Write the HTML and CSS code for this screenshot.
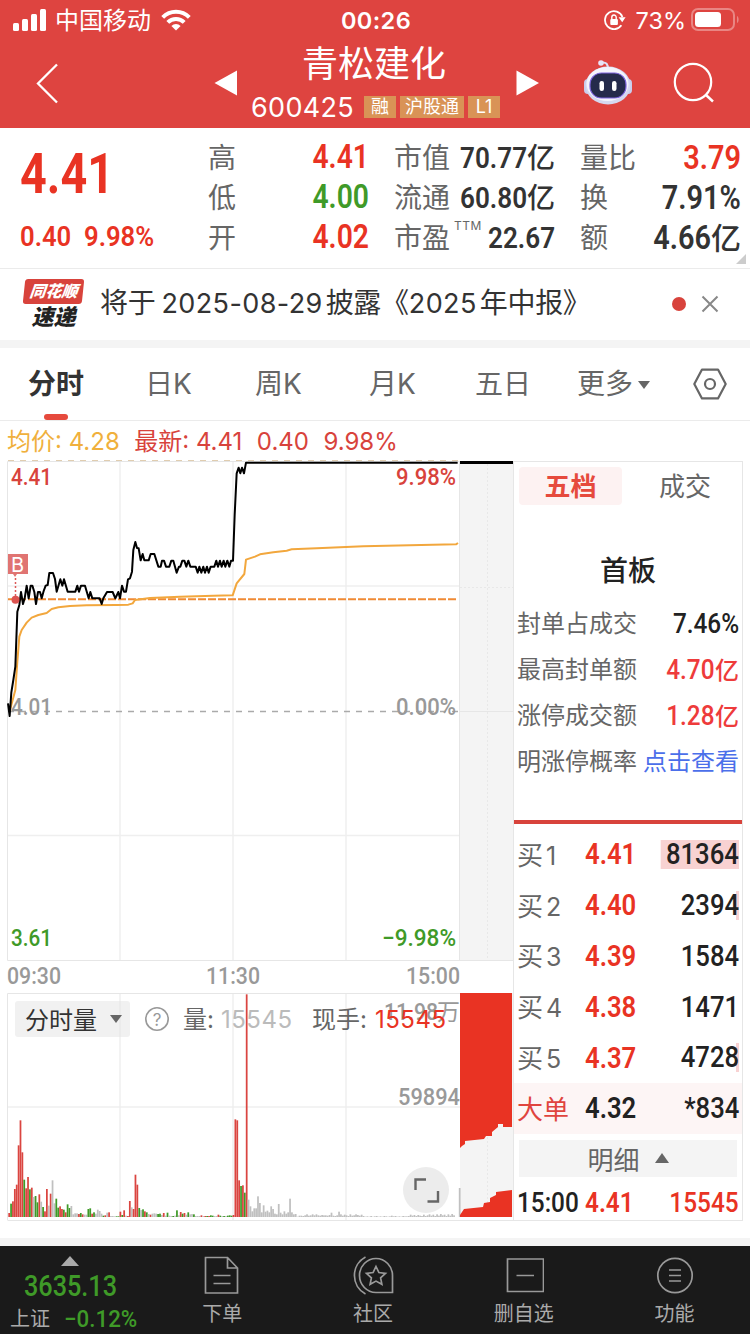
FILE: index.html
```html
<!DOCTYPE html>
<html lang="zh-CN">
<head>
    <meta charset="UTF-8">
    <meta name="viewport" content="width=device-width, initial-scale=1.0">
    <title>青松建化 600425</title>
    <link rel="stylesheet" href="styles.css">
</head>
<body>
    <header class="header">
        <div class="status-bar">
            <div class="status-left">
                <svg width="34" height="22" viewBox="0 0 34 22" fill="#fff">
                    <rect x="0" y="14" width="6" height="8" rx="1.5"/>
                    <rect x="9" y="10" width="6" height="12" rx="1.5"/>
                    <rect x="18" y="5" width="6" height="17" rx="1.5"/>
                    <rect x="27" y="0" width="6" height="22" rx="1.5"/>
                </svg>
                <span class="carrier">中国移动</span>
                <svg width="30" height="22" viewBox="0 0 30 22" fill="none" stroke="#fff" stroke-width="4">
                    <path d="M1.7 8.3a18.8 18.8 0 0 1 26.6 0"/>
                    <path d="M6.8 13.4a11.6 11.6 0 0 1 16.4 0"/>
                    <path d="M15 21.5l-4.6-4.6a6.5 6.5 0 0 1 9.2 0z" fill="#fff" stroke="none"/>
                </svg>
            </div>
            <div class="clock">00:26</div>
            <div class="status-right">
                <svg width="22" height="20" viewBox="0 0 22 20">
                    <path d="M18.4 7a9 9 0 1 0-1 8.3" fill="none" stroke="#fff" stroke-width="1.8"/>
                    <path d="M14.6 7.2h7l-3.4 5z" fill="#fff"/>
                    <rect x="6.3" y="9" width="7.6" height="6" rx="1" fill="#fff"/>
                    <path d="M7.8 9V7.2a2.2 2.2 0 0 1 4.4 0V9" fill="none" stroke="#fff" stroke-width="1.4"/>
                </svg>
                <span class="battery-text">73%</span>
                <svg width="49" height="24" viewBox="0 0 49 24">
                    <rect x="1" y="1" width="42" height="21" rx="6" fill="none" stroke="#e98683" stroke-width="2"/>
                    <rect x="4" y="4" width="26" height="15" rx="3.5" fill="#fff"/>
                    <path d="M46 8c2.200 1 2.200 6 0 7z" fill="#e98683"/>
                </svg>
            </div>
        </div>
        <div class="title-bar">
            <svg class="back" width="26" height="42" viewBox="0 0 26 42"><path d="M22 2.500L3 21.500l19 19" fill="none" stroke="#fff" stroke-width="2.300"/></svg>
            <svg class="prev" width="24" height="26" viewBox="0 0 24 26"><path d="M0.500 13L23 0.500v25z" fill="#fff"/></svg>
            <div class="stock">
                <div class="stock-name">青松建化</div>
                <div class="stock-code">600425 <span class="tag">融</span><span class="tag tag-wide">沪股通</span><span class="tag">L1</span></div>
            </div>
            <svg class="next" width="24" height="26" viewBox="0 0 24 26"><path d="M23 13L0.500 0.500v25z" fill="#fff"/></svg>
            <svg class="robot" width="50" height="46" viewBox="0 0 50 46">
                <path d="M18.500 2.500c5-.5 6.500 1.500 6.500 7" fill="none" stroke="#dfe0f4" stroke-width="2"/>
                <circle cx="18" cy="3" r="2.800" fill="#e8e3f6"/>
                <rect x="1" y="19" width="8" height="15" rx="4" fill="#c9cdec"/>
                <rect x="41" y="19" width="8" height="15" rx="4" fill="#c9cdec"/>
                <ellipse cx="25" cy="25.500" rx="22.500" ry="19" fill="#d5d8f0"/>
                <ellipse cx="24.500" cy="24" rx="21" ry="17" fill="#f4f4fc"/>
                <rect x="7" y="13" width="36" height="25" rx="11.500" fill="#252b4b" stroke="#7c63dc" stroke-width="1.200"/>
                <rect x="16.500" y="21" width="4.500" height="10" rx="2.200" fill="#fff"/>
                <rect x="29" y="21" width="4.500" height="10" rx="2.200" fill="#fff"/>
            </svg>
            <svg class="search" width="42" height="42" viewBox="0 0 42 42"><circle cx="20" cy="20" r="18.200" fill="none" stroke="#fff" stroke-width="2.200"/><path d="M33 33l7 6.500" stroke="#fff" stroke-width="2.400"/></svg>
        </div>
    </header>

    <section class="quote">
        <div class="quote-price">
            <div class="price num">4.41</div>
            <div class="change"><span class="num">0.40</span><span class="num">9.98%</span></div>
        </div>
        <dl class="stats">
            <div><dt>高</dt><dd class="red"><span class="num">4.41</span></dd></div>
            <div><dt>低</dt><dd class="green"><span class="num">4.00</span></dd></div>
            <div><dt>开</dt><dd class="red"><span class="num">4.02</span></dd></div>
        </dl>
        <dl class="stats stats-mid">
            <div><dt>市值</dt><dd><span class="num">70.77</span>亿</dd></div>
            <div><dt>流通</dt><dd><span class="num">60.80</span>亿</dd></div>
            <div><dt>市盈<sup>TTM</sup></dt><dd><span class="num">22.67</span></dd></div>
        </dl>
        <dl class="stats stats-right">
            <div><dt>量比</dt><dd class="red"><span class="num">3.79</span></dd></div>
            <div><dt>换</dt><dd><span class="num">7.91%</span></dd></div>
            <div><dt>额</dt><dd><span class="num">4.66</span>亿</dd></div>
        </dl>
        <span class="corner"></span>
    </section>

    <section class="notice">
        <div class="notice-logo">
            <div class="logo-top">同花顺</div>
            <div class="logo-bottom">速递</div>
        </div>
        <div class="notice-text">将于<span>2025-08-29</span>披露《<span>2025</span>年中报》</div>
        <span class="dot"></span>
        <svg width="18" height="18" viewBox="0 0 18 18"><path d="M1.500 1.500l15 15M16.500 1.500l-15 15" stroke="#888" stroke-width="2"/></svg>
    </section>

    <nav class="tabs">
        <a class="active">分时</a>
        <a>日K</a>
        <a>周K</a>
        <a>月K</a>
        <a>五日</a>
        <a class="more">更多<i class="caret"></i></a>
        <svg width="34" height="32" viewBox="0 0 34 32" fill="none" stroke="#666" stroke-width="2.200"><path d="M9 1.600h16L32.700 16 25 30.400H9L1.300 16z" stroke-linejoin="round"/><circle cx="17" cy="16" r="5"/></svg>
    </nav>

    <div class="legend">
        <span class="avg">均价: 4.28</span>
        <span>最新: 4.41</span>
        <span>0.40</span>
        <span>9.98%</span>
    </div>

    <main class="main">
        <svg class="chart" width="513" height="760" viewBox="0 0 513 760">
            <!-- after-hours strip -->
            <rect x="460" y="1" width="53" height="498" fill="#f4f4f4"/>
            <rect x="460" y="532" width="53" height="224" fill="#f4f4f4"/>
            <path d="M487.500 3v496M487.500 660v96M460 126.500h53" stroke="#e8e8e8" stroke-dasharray="2 2"/>
            <!-- grid -->
            <g fill="none" stroke="#e6e6e6">
                <path d="M7.500 499.500V.5H513M7.500 499.500H513M459.500 0v499M460 250.500h53"/>
                <path d="M7.500 759V532.500H460M7.500 759.500H513"/>
                <path d="M120 1v498M233 1v498M346 1v498M8 125h451M8 374.500h451M120 533v226M233 533v226M346 533v226M8 646h452" stroke="#efefef" stroke-width="1.500"/>
            </g>
            <path d="M8 -.5h452" stroke="#e0cdb0" stroke-dasharray="6 6"/>
            <path d="M8 250.500h451" stroke="#aaa" stroke-width="1.600" stroke-dasharray="6 6"/>
            <path d="M8 138.300h448" stroke="#f08a35" stroke-width="2" stroke-dasharray="8 2"/>
            <!-- line points are stored at 3x -->
            <g transform="translate(0 -6) scale(.33333)" fill="none" stroke-linejoin="round">
                <polyline stroke="#f2a73d" stroke-width="6" points="30,765 46,705 52,620 58,545 65,525 80,503 95,488 115,480 140,474 155,462 175,457 210,453 260,451 350,450 385,449 398,445 405,435 450,429 540,425 640,422 698,421 710,385 733,357 738,314 765,305 780,298 820,292 860,287 875,283 950,280 1090,274 1368,268 1374,264"/>
                <polyline stroke="#000" stroke-width="6" points="24,745 29,783 34,712 40,675 46,635 52,470 58,450 63,411 69,447 74,430 80,392 86,430 92,392 97,392 103,411 108,447 114,411 120,411 125,430 131,408 137,392 143,390 148,354 159,354 165,372 170,410 181,373 187,392 192,373 203,410 226,410 232,392 237,410 243,392 255,392 266,430 271,411 277,430 299,430 305,447 310,430 321,411 338,411 346,430 355,411 360,430 366,392 372,410 378,410 384,373 390,370 396,350 400,285 406,261 411,279 416,280 422,316 428,297 433,316 446,316 452,297 463,297 475,335 482,335 486,317 492,317 498,335 508,335 514,317 520,317 530,353 537,335 541,335 547,317 553,317 559,335 565,317 571,335 587,335 593,353 598,335 604,353 610,335 615,353 621,335 626,353 632,335 643,335 649,317 654,335 660,317 665,335 671,317 676,335 682,317 688,335 693,317 699,317 704,180 710,55 716,38 721,55 726,38 732,55 738,23 1373,23"/>
            </g>
            <path d="M460 1.500h53" stroke="#000" stroke-width="3"/>
            <!-- buy marker -->
            <path d="M8 93h20v20H17l-2 3-2-3H8z" fill="#e07472"/>
            <text x="17.500" y="110.500" class="marker" text-anchor="middle">B</text>
            <path d="M15.500 117v18" stroke="#dc5a58" stroke-width="1.500" stroke-dasharray="2 2"/>
            <circle cx="15.500" cy="138.700" r="4" fill="#dc5350"/>

            <text x="11" y="23.500" class="axis red" textLength="41" lengthAdjust="spacingAndGlyphs">4.41</text>
            <text x="396" y="23.500" class="axis red" textLength="60" lengthAdjust="spacingAndGlyphs">9.98%</text>
            <text x="11" y="254" class="axis" textLength="41" lengthAdjust="spacingAndGlyphs">4.01</text>
            <text x="396" y="254" class="axis" textLength="60" lengthAdjust="spacingAndGlyphs">0.00%</text>
            <text x="11" y="485" class="axis green" textLength="41" lengthAdjust="spacingAndGlyphs">3.61</text>
            <text x="382" y="485" class="axis green" textLength="74" lengthAdjust="spacingAndGlyphs">−9.98%</text>
            <text x="7" y="523" class="axis" textLength="54" lengthAdjust="spacingAndGlyphs">09:30</text>
            <text x="206" y="523" class="axis" textLength="54" lengthAdjust="spacingAndGlyphs">11:30</text>
            <text x="406" y="523" class="axis" textLength="54" lengthAdjust="spacingAndGlyphs">15:00</text>

            <!-- volume -->
            <rect x="15" y="540" width="115" height="36" rx="3" fill="#f1f1f1"/>
            <path d="M120 540v36" stroke="#e9e9e9" stroke-width="1.500"/>
            <text x="25" y="567.500" class="label dark">分时量</text>
            <path d="M110 554h12l-6 8z" fill="#666"/>
            <circle cx="157" cy="558" r="11.200" fill="none" stroke="#999" stroke-width="1.600"/>
            <text x="157" y="564.500" class="help" text-anchor="middle">?</text>
            <text x="183" y="567" class="label">量:</text>
            <text x="221" y="566.500" class="label light" textLength="71">15545</text>
            <text x="312" y="567" class="label dim">现手:</text>
            <text x="384" y="559" class="axis" textLength="54" lengthAdjust="spacingAndGlyphs">11.98</text>
            <text x="437" y="559" class="axis unit">万</text>
            <text x="375" y="566.500" class="label bright" textLength="71">15545</text>
            <text x="398" y="644" class="axis" textLength="62" lengthAdjust="spacingAndGlyphs">59894</text>
            <g id="bars"></g>
            <path d="M460 532h52v134h-9v-3h-5v3l-6 5v4h-6l-2 3-19 2v3l-3 2-2 2z" fill="#e93323"/>
            <path d="M460 756v-2l4-6 19-2 1-4 6-1v-4l6-3v-3l16-2v27z" fill="#e93323"/>
            <circle cx="426" cy="729" r="23" fill="#ececec"/>
            <path d="M415.500 729v-10.500h10.500M427.500 740.500h10.500V730" fill="none" stroke="#666" stroke-width="2.400"/>
        </svg>

        <aside class="panel">
            <div class="panel-tabs"><span class="active">五档</span><span>成交</span></div>
            <h2>首板</h2>
            <ul class="limits">
                <li>封单占成交<b><span class="num">7.46%</span></b></li>
                <li>最高封单额<b class="red"><span class="num">4.70</span>亿</b></li>
                <li>涨停成交额<b class="red"><span class="num">1.28</span>亿</b></li>
                <li>明涨停概率<a>点击查看</a></li>
            </ul>
            <ul class="orders">
                <li><span>买<em>1</em></span><span class="num red">4.41</span><span class="num vol hot">81364</span></li>
                <li><span>买<em>2</em></span><span class="num red">4.40</span><span class="num vol edge">2394</span></li>
                <li><span>买<em>3</em></span><span class="num red">4.39</span><span class="num vol">1584</span></li>
                <li><span>买<em>4</em></span><span class="num red">4.38</span><span class="num vol">1471</span></li>
                <li><span>买<em>5</em></span><span class="num red">4.37</span><span class="num vol edge">4728</span></li>
                <li class="big"><span class="red">大单</span><span class="num">4.32</span><span class="num vol">*834</span></li>
            </ul>
            <div class="detail">明细 <i></i></div>
            <div class="trade"><span class="num">15:00</span><span class="num red">4.41</span><span class="num vol red">15545</span></div>
        </aside>
    </main>

    <footer class="footer">
        <div class="index">
            <i></i>
            <div class="index-value"><span class="num">3635.13</span></div>
            <div class="index-change">上证<span class="num">−0.12%</span></div>
        </div>
        <div class="nav-item">
            <svg width="40" height="40" viewBox="0 0 40 40"><path d="M3.500 2.500h22l10 10.500v25h-32zM25.500 2.500V13h10M11.500 20.500h17M11.500 28.500h17"/></svg>
            <span>下单</span>
        </div>
        <div class="nav-item">
            <svg width="42" height="40" viewBox="0 0 42 40"><path d="M24 37.500h16.500V20.500A16.500 17 0 1 0 24 37.500zM13.500 2a21 21 0 0 0 0 37M24 11.500l2.900 6 6.600.8-4.900 4.500 1.300 6.500-5.900-3.200-5.900 3.200 1.300-6.500-4.900-4.500 6.600-.8z"/></svg>
            <span>社区</span>
        </div>
        <div class="nav-item">
            <svg width="40" height="40" viewBox="0 0 40 40"><path d="M3.500 4h36v32.500h-36zM12.500 20.500h17.500"/></svg>
            <span>删自选</span>
        </div>
        <div class="nav-item">
            <svg width="40" height="40" viewBox="0 0 40 40"><circle cx="20" cy="20.500" r="17.200"/><path d="M14 15h12M14 20.500h12M14 26h12"/></svg>
            <span>功能</span>
        </div>
    </footer>

    <script src="script.js"></script>
</body>
</html>
```
FILE: styles.css
```css
* {
    box-sizing: border-box;
}

body {
    margin: 0;
    width: 750px;
    height: 1334px;
    overflow: hidden;
    background: #fff;
    color: #666;
    font-family: Inter, 'Noto Sans CJK SC', sans-serif;
    font-size: 28px;
}

svg {
    display: block;
    flex: none;
}

dl, dd, ul, h2 {
    margin: 0;
    padding: 0;
}

ul {
    list-style: none;
}

/* narrow DIN-like figures */
.num {
    display: inline-block;
    font-family: Roboto, 'Noto Sans CJK SC', sans-serif;
    font-weight: 600;
    transform: scaleX(.87);
    transform-origin: right center;
}

.red {
    color: #e93323;
}

.green {
    color: #3f9a28;
}

.header {
    height: 128px;
    background: #de4440;
    color: #fff;
}

.status-bar {
    display: grid;
    grid-template-columns: 1fr 70px 1fr;
    align-items: center;
    height: 40px;
    padding: 0 10px 0 13px;
}

.status-left, .status-right {
    display: flex;
    align-items: center;
}

.status-right {
    justify-content: flex-end;
}

.carrier {
    margin: 0 10px 0 8px;
    font-size: 24px;
    line-height: 40px;
    position: relative;
    top: 1px;
}

.clock {
    font-size: 23.500px;
    font-weight: 600;
    text-align: center;
    letter-spacing: 0.4px;
    margin-left: -1px;
    white-space: nowrap;
}

.battery-text {
    margin: 0 5px 0 10px;
    font-size: 23.5px;
}

.title-bar {
    display: flex;
    height: 88px;
    padding-left: 35px;
}

.back {
    margin-top: 22px;
}

.prev {
    margin: 30px 0 0 153px;
}

.stock {
    width: 272px;
    text-align: center;
}

.stock-name {
    margin-top: 1px;
    font-size: 36px;
    line-height: 46px;
}

.stock-code {
    display: flex;
    justify-content: center;
    align-items: center;
    margin-left: 3px;
    height: 40px;
    font-size: 27px;
    letter-spacing: 0.3px;
}

.tag {
    margin-left: 4px;
    width: 32px;
    height: 22px;
    background: #d99356;
    font-size: 18px;
    line-height: 22px;
    letter-spacing: 0;
}

.tag:first-child {
    margin-left: 10px;
}

.tag-wide {
    width: 64px;
}

.next {
    margin: 30px 0 0 6px;
}

.robot {
    margin: 20px 0 0 43px;
}

.search {
    margin: 22px 0 0 40px;
}

.quote {
    display: flex;
    position: relative;
    height: 141px;
    padding: 10px 9px 0 20px;
    border-bottom: 1px solid #ebebeb;
}

.quote-price {
    width: 188px;
    color: #e93323;
}

.price {
    font-size: 55px;
    font-weight: 700;
    line-height: 72px;
    transform: scaleX(.85);
}

.quote-price .num {
    transform-origin: left center;
}

.change {
    display: flex;
    font-size: 28.500px;
    line-height: 53px;
}

.change .num {
    width: 64px;
    transform: scaleX(.9);
}

.stats {
    width: 161px;
    margin-right: 25px;
}

.stats-right {
    margin-right: 0;
}

.stats > div {
    display: flex;
    justify-content: space-between;
    height: 40px;
    line-height: 41px;
}

.stats dt {
    position: relative;
    white-space: nowrap;
}

.stats dd {
    color: #333;
    font-weight: 500;
    font-size: 28px;
    white-space: nowrap;
}

.stats dd.red {
    color: #e93323;
}

.stats dd.green {
    color: #3f9a28;
}

.stats .num {
    font-size: 32.500px;
    line-height: 38px;
}

.stats-mid .num {
    font-size: 30px;
}

.stats-right dd {
    font-size: 30px;
}

.stats-right .num {
    transform: scaleX(.89);
}

.stats sup {
    position: absolute;
    left: 60px;
    top: -6px;
    font-size: 12px;
    line-height: 28px;
    letter-spacing: 0.5px;
}

.corner {
    position: absolute;
    right: 4px;
    bottom: 4px;
    border: 5px solid #ccc;
    border-top-color: transparent;
    border-left-color: transparent;
}

.notice {
    display: flex;
    align-items: center;
    height: 71px;
    padding: 0 31px 2px 24px;
    color: #333;
}

.notice-logo {
    width: 59px;
    height: 50px;
    margin-right: 17px;
    text-align: center;
    font-weight: 900;
    font-style: italic;
}

.logo-top {
    height: 25px;
    border-radius: 3px;
    background: #d8433c;
    color: #fff;
    font-size: 16px;
    line-height: 24px;
    transform: skewX(-6deg);
}

.logo-bottom {
    font-size: 22px;
    line-height: 26px;
    color: #222;
}

.notice-text {
    flex: 1;
    line-height: 40px;
    margin-top: -1px;
    letter-spacing: -0.3px;
    white-space: nowrap;
}

.notice-text span {
    font-size: 27px;
    letter-spacing: 0.4px;
    margin: 0 3px 0 6px;
}

.notice-text span + span {
    margin-left: 0;
}

.dot {
    width: 14px;
    height: 14px;
    margin-right: 15px;
    border-radius: 50%;
    background: #d8433c;
}

.tabs {
    display: flex;
    align-items: center;
    height: 81px;
    padding: 0 0 0 28px;
    border-top: 8px solid #f4f4f4;
    border-bottom: 1px solid #ebebeb;
}

.tabs a {
    position: relative;
    width: 112px;
    line-height: 72px;
    white-space: nowrap;
}

.tabs a:first-child {
    width: 117px;
}

.tabs a:nth-child(2) {
    width: 110px;
}

.tabs a:nth-child(3) {
    width: 114px;
}

.tabs a:nth-child(4) {
    width: 106px;
}

.tabs a:nth-child(5) {
    width: 102px;
}

.tabs .more {
    width: 116px;
}

.tabs .active {
    color: #333;
    font-weight: bold;
}

.tabs .active::after {
    content: '';
    position: absolute;
    left: 16px;
    bottom: 0;
    width: 24px;
    height: 6px;
    border-radius: 3px;
    background: #e64a3d;
}

.caret {
    display: inline-block;
    margin: 0 0 5px 5px;
    border: 6px solid transparent;
    border-top: 8px solid #666;
    border-bottom: 0;
}

.legend {
    display: flex;
    gap: 14.500px;
    height: 40px;
    padding-left: 7px;
    font-size: 24px;
    line-height: 42px;
    color: #d8433c;
}

.legend .avg {
    color: #f0b03c;
}

.main {
    display: flex;
    height: 785px;
    border-bottom: 8px solid #f4f4f4;
}

.chart {
    overflow: visible;
}

.axis {
    font: 500 24px Roboto, 'Noto Sans CJK SC', sans-serif;
    fill: #999;
}

.axis.red {
    fill: #d8433c;
}

.axis.green {
    fill: #3f9a28;
}

.axis.unit {
    font-weight: 400;
    font-size: 23px;
}

.label {
    font-size: 24px;
    fill: #666;
}

.label.dark {
    fill: #333;
}

.label.light {
    fill: #bbb;
}

.label.bright {
    fill: #e93323;
}

.help {
    font-size: 17px;
    fill: #999;
}

.marker {
    font-size: 20px;
    fill: #fff;
}

.panel {
    width: 230px;
    height: 760px;
    border: 1px solid #e6e6e6;
    white-space: nowrap;
}

.panel-tabs {
    display: flex;
    padding: 5px 0 0 5px;
    font-size: 26px;
    line-height: 40px;
    text-align: center;
}

.panel-tabs span {
    flex: none;
    width: 103px;
    height: 38px;
    border-radius: 4px;
}

.panel-tabs span + span {
    width: 126px;
}

.panel-tabs .active {
    background: #fdf2f2;
    color: #e64a3d;
    font-weight: bold;
}

.panel h2 {
    margin-top: 44px;
    color: #222;
    font-size: 28px;
    font-weight: 500;
    line-height: 44px;
    text-align: center;
}

.limits {
    height: 231px;
    padding: 8px 3px 0;
    border-bottom: 4px solid #d8433c;
    font-size: 24px;
}

.limits li {
    display: flex;
    justify-content: space-between;
    height: 46px;
    line-height: 46px;
}

.limits b {
    color: #222;
    font-weight: 500;
}

.limits b.red {
    color: #ee3b3b;
}

.limits .num {
    font-size: 28px;
    font-weight: 500;
}

.limits a {
    color: #4b6fea;
}

.orders {
    padding-top: 5px;
}

.orders li, .trade {
    display: flex;
    align-items: center;
    height: 50.800px;
    padding: 0 3px;
    color: #222;
    font-size: 26px;
}

.orders li > span:first-child {
    width: 68px;
    margin-top: -2px;
    color: #666;
}

.orders li > span.red:first-child {
    color: #e0443e;
}

.orders em {
    margin-left: 3px;
    font-style: normal;
    font-size: 25px;
}

.orders .num, .trade .num {
    font-size: 29.500px;
    transform-origin: left center;
}

.orders .vol, .trade .vol {
    margin-left: auto;
    font-weight: 500;
    transform-origin: right center;
}

.vol.hot {
    padding-left: 6px;
    line-height: 29px;
    background: #f8d2d2;
}

.vol.edge {
    background: linear-gradient(to left, #f8d2d2 3px, transparent 3px);
    line-height: 29px;
}

.big {
    background: #fdf5f5;
}

.detail {
    display: flex;
    justify-content: center;
    align-items: center;
    gap: 15px;
    height: 37px;
    margin: 6px 5px 0;
    background: #f4f4f4;
    font-size: 26px;
}

.detail i {
    border: 7px solid transparent;
    border-bottom: 10px solid #666;
    border-top: 0;
}

.trade .num:first-child {
    width: 68px;
    font-size: 28px;
    font-weight: 500;
}

.trade .num.red {
    font-size: 28px;
    color: #e93323;
}

.footer {
    display: flex;
    height: 88px;
    background: #1a1a1a;
    color: #aaa;
    font-size: 20px;
}

.index {
    width: 147px;
    text-align: center;
    white-space: nowrap;
}

.index i {
    display: block;
    width: 18px;
    margin: 10px 0 0 61px;
    border: 9px solid transparent;
    border-top: 0;
    border-bottom: 10px solid #aaa;
}

.index .num {
    color: #3f9a28;
    font-weight: 500;
    transform-origin: center;
}

.index-value {
    margin-left: -5px;
    font-size: 29px;
    line-height: 40px;
}

.index-change {
    display: flex;
    padding-left: 10px;
    line-height: 26px;
}

.index-change .num {
    margin-left: 14px;
    font-size: 24px;
    transform: scaleX(.93);
    transform-origin: left center;
}

.nav-item {
    display: flex;
    flex-direction: column;
    align-items: center;
    width: 151px;
    padding-top: 9px;
    line-height: 39px;
}

.nav-item svg {
    fill: none;
    stroke: #999;
    stroke-width: 1.700px;
}
```
FILE: script.js
```js
// one entry per minute: colour letter (r/g/n) + height
const volumes = ('r12 g40 r47 r84 r97 r215 r290 r194 g112 r86 r120 g83 r88 n60 g63 g44 r68 n46 g30 r17 ' +
    'r84 n34 r70 n110 n41 g55 g28 r32 r24 g22 r14 g38 g27 n33 n8 n11 n11 r9 g12 r8 ' +
    'n7 n7 g24 g26 r10 g14 n10 n22 n18 n10 g4 r5 n13 r14 n3 n3 n2 g2 g2 r16 ' +
    'g6 r20 n4 r3 r48 n29 r24 r127 r97 g27 n21 g23 r17 g14 n9 r7 n10 n11 n10 g9 ' +
    'g10 n6 r12 n4 g13 n4 n3 g3 n4 g20 n5 r15 g10 r12 n7 g14 n8 n9 g8 n3 ' +
    'n3 n3 r5 n3 r3 g3 r3 g5 g4 n3 n3 r7 g4 n3 g3 n3 g4 g5 g4 r6 ' +
    'r293 r290 r110 g93 r95 g73 r668 n52 n32 n17 n26 n26 n62 n42 n14 n35 n16 n19 n14 n32 ' +
    'n24 n10 n8 n39 n13 n8 n17 n10 n14 n55 n14 n8 n9 n1 n4 n4 n3 n5 n8 n4 ' +
    'n5 n8 n5 n8 n5 n4 n6 n5 n5 n4 n6 n13 n4 n3 n5 n16 n8 n4 n7 n5 ' +
    'n3 n8 n4 n5 n8 n6 n4 n7 n3 n1 n2 n1 n3 n1 n2 n3 n1 n2 n1 n3 ' +
    'n2 n1 n2 n4 n2 n3 n1 n2 n1 n3 n2 n2 n3 n7 n4 n6 n3 n6 n4 n3 ' +
    'n7 n3 n5 n8 n4 n7 n3 n8 n4 n9 n5 n7 n3 n8 n4 n9 n5 n0 n0 n87').split(' ');

const colors = { r: '#da4540', g: '#3f9a28', n: '#c0c0c0' };
const step = 1.885;
const baseline = 756;

document.getElementById('bars').innerHTML = volumes.map((item, i) => {
    const h = item.slice(1) / 3;
    return `<rect x="${(8.3 + i * step).toFixed(2)}" y="${(baseline - h).toFixed(2)}" width="1.75" height="${h.toFixed(2)}" fill="${colors[item[0]]}"/>`;
}).join('');
```
